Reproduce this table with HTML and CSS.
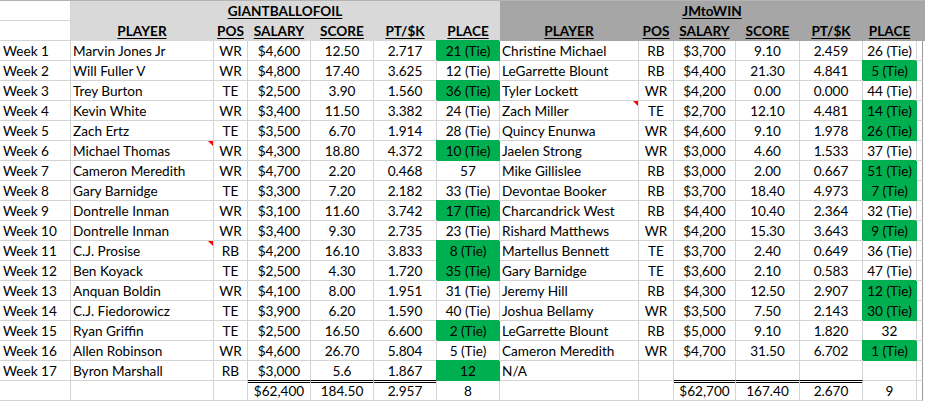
FILE: index.html
```html
<!DOCTYPE html>
<html>
<head>
<meta charset="utf-8">
<link rel="stylesheet" href="styles.css">
</head>
<body>
<div class="sheet">
  <!-- header row 1 -->
  <div class="c"></div>
  <div class="c hl hc span6"><u>GIANTBALLOFOIL</u></div>
  <div class="c hd hc span8"><u>JMtoWIN</u></div>
  <!-- header row 2 -->
  <div class="c"></div>
  <div class="c hl hc"><u>PLAYER</u></div>
  <div class="c hl hc"><u>POS</u></div>
  <div class="c hl hc"><u>SALARY</u></div>
  <div class="c hl hc"><u>SCORE</u></div>
  <div class="c hl hc"><u>PT/$K</u></div>
  <div class="c hl hc"><u>PLACE</u></div>
  <div class="c hd hc"><u>PLAYER</u></div>
  <div class="c hd hc"><u>POS</u></div>
  <div class="c hd hc"><u>SALARY</u></div>
  <div class="c hd hc"><u>SCORE</u></div>
  <div class="c hd hc"><u>PT/$K</u></div>
  <div class="c hd hc"><u>PLACE</u></div>
  <div class="c hd span2"></div>

  <div class="c wk">Week 1</div><div class="c nm">Marvin Jones Jr</div><div class="c ct">WR</div><div class="c ct">$4,600</div><div class="c ct">12.50</div><div class="c ct">2.717</div><div class="c ct g">21 (Tie)</div><div class="c nm">Christine Michael</div><div class="c ct">RB</div><div class="c ct">$3,700</div><div class="c ct">9.10</div><div class="c ct">2.459</div><div class="c ct">26 (Tie)</div><div class="c edge"></div><div class="c pad"></div>
  <div class="c wk">Week 2</div><div class="c nm">Will Fuller V</div><div class="c ct">WR</div><div class="c ct">$4,800</div><div class="c ct">17.40</div><div class="c ct">3.625</div><div class="c ct">12 (Tie)</div><div class="c nm">LeGarrette Blount</div><div class="c ct">RB</div><div class="c ct">$4,400</div><div class="c ct">21.30</div><div class="c ct">4.841</div><div class="c ct g">5 (Tie)</div><div class="c edge"></div><div class="c pad"></div>
  <div class="c wk">Week 3</div><div class="c nm">Trey Burton</div><div class="c ct">TE</div><div class="c ct">$2,500</div><div class="c ct">3.90</div><div class="c ct">1.560</div><div class="c ct g">36 (Tie)</div><div class="c nm">Tyler Lockett</div><div class="c ct">WR</div><div class="c ct">$4,200</div><div class="c ct">0.00</div><div class="c ct">0.000</div><div class="c ct">44 (Tie)</div><div class="c edge"></div><div class="c pad"></div>
  <div class="c wk">Week 4</div><div class="c nm">Kevin White</div><div class="c ct">WR</div><div class="c ct">$3,400</div><div class="c ct">11.50</div><div class="c ct">3.382</div><div class="c ct">24 (Tie)</div><div class="c nm">Zach Miller<span class="note"></span></div><div class="c ct">TE</div><div class="c ct">$2,700</div><div class="c ct">12.10</div><div class="c ct">4.481</div><div class="c ct g">14 (Tie)</div><div class="c edge"></div><div class="c pad"></div>
  <div class="c wk">Week 5</div><div class="c nm">Zach Ertz</div><div class="c ct">TE</div><div class="c ct">$3,500</div><div class="c ct">6.70</div><div class="c ct">1.914</div><div class="c ct">28 (Tie)</div><div class="c nm">Quincy Enunwa</div><div class="c ct">WR</div><div class="c ct">$4,600</div><div class="c ct">9.10</div><div class="c ct">1.978</div><div class="c ct g">26 (Tie)</div><div class="c edge"></div><div class="c pad"></div>
  <div class="c wk">Week 6</div><div class="c nm">Michael Thomas<span class="note"></span></div><div class="c ct">WR</div><div class="c ct">$4,300</div><div class="c ct">18.80</div><div class="c ct">4.372</div><div class="c ct g">10 (Tie)</div><div class="c nm">Jaelen Strong</div><div class="c ct">WR</div><div class="c ct">$3,000</div><div class="c ct">4.60</div><div class="c ct">1.533</div><div class="c ct">37 (Tie)</div><div class="c edge"></div><div class="c pad"></div>
  <div class="c wk">Week 7</div><div class="c nm">Cameron Meredith</div><div class="c ct">WR</div><div class="c ct">$4,700</div><div class="c ct">2.20</div><div class="c ct">0.468</div><div class="c ct">57</div><div class="c nm">Mike Gillislee</div><div class="c ct">RB</div><div class="c ct">$3,000</div><div class="c ct">2.00</div><div class="c ct">0.667</div><div class="c ct g">51 (Tie)</div><div class="c edge"></div><div class="c pad"></div>
  <div class="c wk">Week 8</div><div class="c nm">Gary Barnidge</div><div class="c ct">TE</div><div class="c ct">$3,300</div><div class="c ct">7.20</div><div class="c ct">2.182</div><div class="c ct">33 (Tie)</div><div class="c nm">Devontae Booker</div><div class="c ct">RB</div><div class="c ct">$3,700</div><div class="c ct">18.40</div><div class="c ct">4.973</div><div class="c ct g">7 (Tie)</div><div class="c edge"></div><div class="c pad"></div>
  <div class="c wk">Week 9</div><div class="c nm">Dontrelle Inman</div><div class="c ct">WR</div><div class="c ct">$3,100</div><div class="c ct">11.60</div><div class="c ct">3.742</div><div class="c ct g">17 (Tie)</div><div class="c nm">Charcandrick West</div><div class="c ct">RB</div><div class="c ct">$4,400</div><div class="c ct">10.40</div><div class="c ct">2.364</div><div class="c ct">32 (Tie)</div><div class="c edge"></div><div class="c pad"></div>
  <div class="c wk">Week 10</div><div class="c nm">Dontrelle Inman</div><div class="c ct">WR</div><div class="c ct">$3,400</div><div class="c ct">9.30</div><div class="c ct">2.735</div><div class="c ct">23 (Tie)</div><div class="c nm">Rishard Matthews</div><div class="c ct">WR</div><div class="c ct">$4,200</div><div class="c ct">15.30</div><div class="c ct">3.643</div><div class="c ct g">9 (Tie)</div><div class="c edge"></div><div class="c pad"></div>
  <div class="c wk">Week 11</div><div class="c nm">C.J. Prosise<span class="note"></span></div><div class="c ct">RB</div><div class="c ct">$4,200</div><div class="c ct">16.10</div><div class="c ct">3.833</div><div class="c ct g">8 (Tie)</div><div class="c nm">Martellus Bennett</div><div class="c ct">TE</div><div class="c ct">$3,700</div><div class="c ct">2.40</div><div class="c ct">0.649</div><div class="c ct">36 (Tie)</div><div class="c edge"></div><div class="c pad"></div>
  <div class="c wk">Week 12</div><div class="c nm">Ben Koyack</div><div class="c ct">TE</div><div class="c ct">$2,500</div><div class="c ct">4.30</div><div class="c ct">1.720</div><div class="c ct g">35 (Tie)</div><div class="c nm">Gary Barnidge</div><div class="c ct">TE</div><div class="c ct">$3,600</div><div class="c ct">2.10</div><div class="c ct">0.583</div><div class="c ct">47 (Tie)</div><div class="c edge"></div><div class="c pad"></div>
  <div class="c wk">Week 13</div><div class="c nm">Anquan Boldin</div><div class="c ct">WR</div><div class="c ct">$4,100</div><div class="c ct">8.00</div><div class="c ct">1.951</div><div class="c ct">31 (Tie)</div><div class="c nm">Jeremy Hill</div><div class="c ct">RB</div><div class="c ct">$4,300</div><div class="c ct">12.50</div><div class="c ct">2.907</div><div class="c ct g">12 (Tie)</div><div class="c edge"></div><div class="c pad"></div>
  <div class="c wk">Week 14</div><div class="c nm">C.J. Fiedorowicz</div><div class="c ct">TE</div><div class="c ct">$3,900</div><div class="c ct">6.20</div><div class="c ct">1.590</div><div class="c ct">40 (Tie)</div><div class="c nm">Joshua Bellamy</div><div class="c ct">WR</div><div class="c ct">$3,500</div><div class="c ct">7.50</div><div class="c ct">2.143</div><div class="c ct g">30 (Tie)</div><div class="c edge"></div><div class="c pad"></div>
  <div class="c wk">Week 15</div><div class="c nm">Ryan Griffin</div><div class="c ct">TE</div><div class="c ct">$2,500</div><div class="c ct">16.50</div><div class="c ct">6.600</div><div class="c ct g">2 (Tie)</div><div class="c nm">LeGarrette Blount</div><div class="c ct">RB</div><div class="c ct">$5,000</div><div class="c ct">9.10</div><div class="c ct">1.820</div><div class="c ct">32</div><div class="c edge"></div><div class="c pad"></div>
  <div class="c wk">Week 16</div><div class="c nm">Allen Robinson</div><div class="c ct">WR</div><div class="c ct">$4,600</div><div class="c ct">26.70</div><div class="c ct">5.804</div><div class="c ct">5 (Tie)</div><div class="c nm">Cameron Meredith</div><div class="c ct">WR</div><div class="c ct">$4,700</div><div class="c ct">31.50</div><div class="c ct">6.702</div><div class="c ct g">1 (Tie)</div><div class="c edge"></div><div class="c pad"></div>
  <div class="c wk">Week 17</div><div class="c nm">Byron Marshall</div><div class="c ct">RB</div><div class="c ct ul">$3,000</div><div class="c ct ul">5.6</div><div class="c ct ul">1.867</div><div class="c ct g">12</div><div class="c nm">N/A</div><div class="c ct"></div><div class="c ct ul"></div><div class="c ct ul"></div><div class="c ct ul"></div><div class="c ct"></div><div class="c edge"></div><div class="c pad"></div>
  <!-- totals -->
  <div class="c wk"></div><div class="c nm"></div><div class="c ct"></div><div class="c ct dt">$62,400</div><div class="c ct dt">184.50</div><div class="c ct dt">2.957</div><div class="c ct">8</div><div class="c nm"></div><div class="c ct"></div><div class="c ct dt">$62,700</div><div class="c ct dt">167.40</div><div class="c ct dt">2.670</div><div class="c ct">9</div><div class="c edge"></div><div class="c pad"></div>
</div>
</body>
</html>
```
FILE: styles.css
```css
html, body {
  margin: 0;
  padding: 0;
  background: #ffffff;
}

body {
  font-family: Lato, "Liberation Sans", sans-serif;
  font-size: 13.6px;
  color: #000000;
}

.sheet {
  display: grid;
  grid-template-columns: 71px 143px 34px 63px 63px 63px 63px 139px 35px 62px 64px 63px 54px 6px 2px;
  grid-auto-rows: 20px;
  border-top: 1px solid #b4b4b4;
  width: 925px;
}

.c {
  box-sizing: border-box;
  height: 20px;
  border-right: 1px solid #d4d4d4;
  border-bottom: 1px solid #d4d4d4;
  line-height: 19px;
  padding: 1px 2px 0;
  white-space: nowrap;
  overflow: hidden;
  position: relative;
  background: #ffffff;
}

.wk { padding-left: 3px; }
.nm { text-align: left; overflow: visible; }
.ct { text-align: center; padding-left: 0; padding-right: 0; }

.hc {
  text-align: center;
  font-weight: 700;
  padding-left: 0;
  padding-right: 0;
}

.hc u {
  text-decoration-thickness: 1px;
  text-underline-offset: 2px;
}

.hl {
  background: #d9d9d9;
  border-color: #d9d9d9;
}

.hd {
  background: #a6a6a6;
  border-color: #a6a6a6;
}

.span6 { grid-column: span 6; }
.span8 { grid-column: span 8; }
.span2 { grid-column: span 2; }

.g {
  background: #00b050;
  border-color: #00b050;
  box-shadow: -1px -1px 0 0 #00b050;
}

.edge {
  border-right-color: #9a9a9a;
}

.pad {
  border: none;
}

.ul {
  border-bottom-color: #000000;
}

.dt {
  background: linear-gradient(to bottom, transparent 1px, #000000 1px, #000000 2px, transparent 2px);
}

.note {
  position: absolute;
  top: 0;
  right: 0;
  width: 0;
  height: 0;
  border-top: 5px solid #ff0000;
  border-left: 5px solid transparent;
}
```
